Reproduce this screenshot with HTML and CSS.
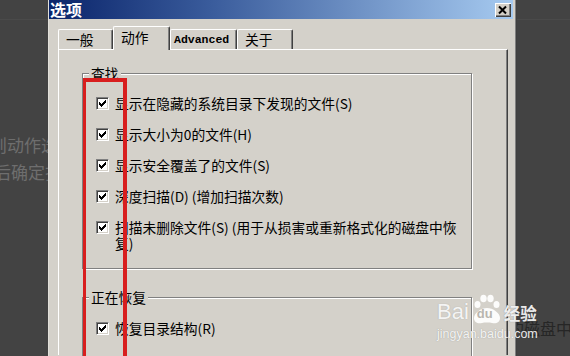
FILE: index.html
```html
<!DOCTYPE html>
<html lang="zh">
<head>
<meta charset="utf-8">
<title>选项</title>
<link rel="stylesheet" href="styles.css">
</head>
<body>
<div class="desk">
  <div class="bg-top"></div>
  <div class="bg-line l1">则动作选项</div>
  <div class="bg-line l2">后确定扫描</div>
  <div class="bg-line r1">的磁盘中恢</div>
</div>

<div class="dialog">
  <div class="titlebar">
    <span class="title">选项</span>
    <span class="close"><svg width="16" height="14" viewBox="0 0 16 14"><path d="M4 3.5L11 10.5M11 3.5L4 10.5" stroke="#000" stroke-width="2"/></svg></span>
  </div>
  <div class="content">
    <div class="tabs">
      <div class="tab t1">一般</div>
      <div class="tab sel t2">动作</div>
      <div class="tab t3 mono">Advanced</div>
      <div class="tab t4">关于</div>
    </div>
    <div class="panel">
      <div class="group g1">
        <div class="legend">查找</div>
        <div class="rows">
          <div class="row"><span class="cb"><svg width="11" height="11" viewBox="0 0 11 11" shape-rendering="crispEdges"><path d="M8 2h1v1h-1zM7 3h2v1h-2zM2 4h1v1h-1zM6 4h3v1h-3zM2 5h2v1h-2zM5 5h3v1h-3zM2 6h5v1h-5zM3 7h3v1h-3zM4 8h1v1h-1z" fill="#000"/></svg></span><span class="lbl">显示在隐藏的系统目录下发现的文件(S)</span></div>
          <div class="row"><span class="cb"><svg width="11" height="11" viewBox="0 0 11 11" shape-rendering="crispEdges"><path d="M8 2h1v1h-1zM7 3h2v1h-2zM2 4h1v1h-1zM6 4h3v1h-3zM2 5h2v1h-2zM5 5h3v1h-3zM2 6h5v1h-5zM3 7h3v1h-3zM4 8h1v1h-1z" fill="#000"/></svg></span><span class="lbl">显示大小为0的文件(H)</span></div>
          <div class="row"><span class="cb"><svg width="11" height="11" viewBox="0 0 11 11" shape-rendering="crispEdges"><path d="M8 2h1v1h-1zM7 3h2v1h-2zM2 4h1v1h-1zM6 4h3v1h-3zM2 5h2v1h-2zM5 5h3v1h-3zM2 6h5v1h-5zM3 7h3v1h-3zM4 8h1v1h-1z" fill="#000"/></svg></span><span class="lbl">显示安全覆盖了的文件(S)</span></div>
          <div class="row"><span class="cb"><svg width="11" height="11" viewBox="0 0 11 11" shape-rendering="crispEdges"><path d="M8 2h1v1h-1zM7 3h2v1h-2zM2 4h1v1h-1zM6 4h3v1h-3zM2 5h2v1h-2zM5 5h3v1h-3zM2 6h5v1h-5zM3 7h3v1h-3zM4 8h1v1h-1z" fill="#000"/></svg></span><span class="lbl">深度扫描(D) (增加扫描次数)</span></div>
          <div class="row"><span class="cb"><svg width="11" height="11" viewBox="0 0 11 11" shape-rendering="crispEdges"><path d="M8 2h1v1h-1zM7 3h2v1h-2zM2 4h1v1h-1zM6 4h3v1h-3zM2 5h2v1h-2zM5 5h3v1h-3zM2 6h5v1h-5zM3 7h3v1h-3zM4 8h1v1h-1z" fill="#000"/></svg></span><span class="lbl">扫描未删除文件(S) (用于从损害或重新格式化的磁盘中恢<br>复)</span></div>
        </div>
      </div>
      <div class="group g2">
        <div class="legend">正在恢复</div>
        <div class="rows">
          <div class="row"><span class="cb"><svg width="11" height="11" viewBox="0 0 11 11" shape-rendering="crispEdges"><path d="M8 2h1v1h-1zM7 3h2v1h-2zM2 4h1v1h-1zM6 4h3v1h-3zM2 5h2v1h-2zM5 5h3v1h-3zM2 6h5v1h-5zM3 7h3v1h-3zM4 8h1v1h-1z" fill="#000"/></svg></span><span class="lbl">恢复目录结构(R)</span></div>
        </div>
      </div>
    </div>
  </div>
</div>

<div class="redbox"></div>

<div class="watermark">
  <div class="wm-row">
    <span class="wm-bai">Bai</span>
    <span class="wm-paw">
      <svg width="30" height="30" viewBox="0 0 30 30">
        <ellipse cx="5.5" cy="10.5" rx="3" ry="3.5"/>
        <ellipse cx="11.5" cy="4.5" rx="3.2" ry="3.8"/>
        <ellipse cx="18.5" cy="4.5" rx="3.2" ry="3.8"/>
        <ellipse cx="24.5" cy="10.5" rx="3" ry="3.5"/>
        <path d="M15 14C9 14 2 19 2 24C2 28.5 6 30 10 29C12.5 28.4 17.5 28.4 20 29C24 30 28 28.5 28 24C28 19 21 14 15 14Z"/>
      </svg>
      <span class="wm-du">du</span>
    </span>
    <span class="wm-jy">经验</span>
  </div>
  <div class="wm-url">jingyan.baidu.com</div>
</div>
</body>
</html>
```

FILE: styles.css
```css
* { box-sizing: border-box; }

body {
  margin: 0;
  width: 570px;
  height: 356px;
  overflow: hidden;
  position: relative;
  background: #434343;
  font-family: "Noto Sans CJK SC", "Noto Sans", sans-serif;
}

/* background page */
.desk {
  height: 356px;
  overflow: hidden;
  display: flex;
  flex-direction: column;
  white-space: nowrap;
}
.bg-top {
  height: 20px;
  border-bottom: 1px solid #4a4a4a;
  flex: none;
}
.bg-line {
  font-size: 17px;
  line-height: 20px;
  height: 20px;
  color: #6e6e6e;
  flex: none;
}
.l1 { margin-top: 115px; margin-left: -10px; }
.l2 { margin-top: 7px; margin-left: -6px; }
.r1 {
  margin-top: 136px;
  padding-left: 508px;
  font-size: 16px;
  color: #262626;
}

/* dialog window */
.dialog {
  position: absolute;
  left: 48px;
  top: 0;
  width: 469px;
  height: 356px;
  overflow: hidden;
  background: #d4d1ca;
  padding: 0 4px 0 1px;
  box-shadow: inset -1px 0 #404040, inset -2px 0 #808080, inset 1px 0 #e2e0da;
}
.titlebar {
  height: 19px;
  display: flex;
  align-items: center;
  justify-content: space-between;
  padding: 0 2px 0 1px;
  background: linear-gradient(to right, #0a246a 0%, #3a5c9c 35%, #a6caf0 100%);
}
.title {
  color: #fff;
  font-weight: bold;
  font-size: 16px;
  line-height: 19px;
}
.close {
  width: 16px;
  height: 14px;
  background: #d4d0c8;
  box-shadow: inset 1px 1px #fff, inset -1px -1px #404040, inset -2px -2px #808080;
  display: flex;
}

.content {
  padding: 7px 5px 0 9px;
}

/* tabs */
.tabs {
  display: flex;
  align-items: flex-end;
  height: 23px;
  position: relative;
  z-index: 2;
}
.tab {
  height: 20px;
  font-size: 13.75px;
  line-height: 18px;
  color: #000;
  border-top: 1px solid #fff;
  border-left: 1px solid #fff;
  border-right: 1px solid #404040;
  border-radius: 2px 2px 0 0;
  box-shadow: inset -1px 0 #808080;
  background: #d4d1ca;
  padding-left: 7px;
  white-space: nowrap;
}
.t1 { width: 55px; }
.t2 { width: 57px; }
.t3 { width: 67px; padding-left: 3px; }
.t4 { width: 56px; padding-left: 7px; }
.tab.sel {
  height: 24px;
  margin-bottom: -1px;
  line-height: 21px;
}
.mono {
  font-family: "Liberation Mono", monospace;
  font-weight: bold;
  font-size: 11.5px;
  line-height: 20px;
}

.panel {
  width: 450px;
  height: 306px;
  border-top: 1px solid #fff;
  border-left: 1px solid #fff;
  border-right: 1px solid #404040;
  box-shadow: inset -1px 0 #808080;
  padding: 23px 0 0 23px;
}

/* group boxes */
.group {
  width: 390px;
  border: 1px solid #808080;
  box-shadow: 1px 1px 0 #fff, inset 1px 1px 0 #fff;
  display: flex;
  flex-direction: column;
}
.g1 { padding-bottom: 17px; }
.g2 { margin-top: 28px; padding-bottom: 20px; }
.legend {
  align-self: flex-start;
  margin: -9px 0 0 6px;
  padding: 0 2px;
  background: #d4d1ca;
  font-size: 13.75px;
  line-height: 16px;
  height: 16px;
  color: #000;
}
.rows {
  display: flex;
  flex-direction: column;
  gap: 15px;
  padding-top: 14px;
}
.g2 .rows { padding-top: 15px; }
.row {
  display: flex;
  align-items: flex-start;
  padding-left: 13px;
  font-size: 13.75px;
  line-height: 16px;
  color: #000;
}
.cb {
  flex: none;
  width: 13px;
  height: 13px;
  margin-top: 2px;
  margin-right: 6px;
  background: #fff;
  border: 1px solid;
  border-color: #808080 #fff #fff #808080;
  box-shadow: inset 1px 1px #404040, inset -1px -1px #d4d0c8;
  display: flex;
}
.lbl { white-space: nowrap; }

/* red annotation */
.redbox {
  position: absolute;
  left: 83px;
  top: 78px;
  width: 44px;
  height: 278px;
  border: 4px solid #d81e1e;
  border-left-width: 3px;
  border-bottom: none;
  z-index: 5;
}

/* watermark */
.watermark {
  position: absolute;
  left: 437px;
  top: 293px;
  z-index: 6;
  color: rgba(255, 255, 255, 0.9);
  display: flex;
  flex-direction: column;
}
.wm-row {
  display: flex;
  align-items: flex-end;
  height: 31px;
}
.wm-bai {
  font-family: "Liberation Sans", Arial, sans-serif;
  font-size: 22px;
  line-height: 22px;
  margin-bottom: 1px;
  text-shadow: 0 0 1px rgba(120, 120, 120, 0.5);
}
.wm-paw {
  position: relative;
  width: 30px;
  height: 30px;
  margin-left: 3px;
}
.wm-paw svg {
  display: block;
  fill: rgba(255, 255, 255, 0.92);
}
.wm-du {
  position: absolute;
  left: 5px;
  top: 13px;
  font-family: "Liberation Sans", Arial, sans-serif;
  font-weight: bold;
  font-size: 13px;
  line-height: 14px;
  color: #b9b6af;
}
.wm-jy {
  font-weight: bold;
  font-size: 16.5px;
  line-height: 20px;
  margin-left: 2px;
  margin-bottom: 1px;
  text-shadow: 0 0 1px rgba(90, 90, 90, 0.6);
}
.wm-url {
  font-family: "Liberation Sans", Arial, sans-serif;
  font-size: 12.5px;
  line-height: 14px;
  margin-top: 3px;
  text-shadow: 0 0 1px rgba(90, 90, 90, 0.5);
}
```
